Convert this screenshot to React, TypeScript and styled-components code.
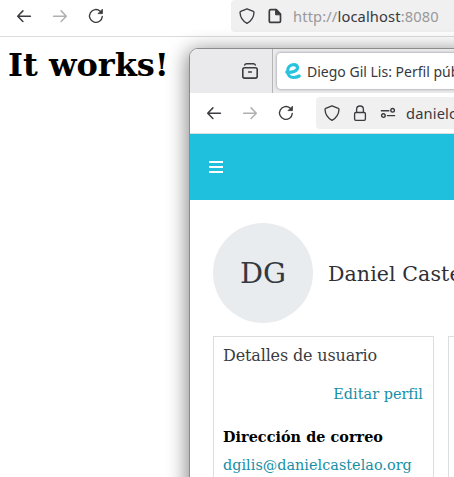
import React from "react";
import styled, { createGlobalStyle } from "styled-components";

const GlobalStyle = createGlobalStyle`
  * { box-sizing: border-box; }
  html, body { margin: 0; height: 100%; overflow: hidden; background: #fff; }
`;

const Desktop = styled.div`
  position: relative;
  width: 454px;
  height: 477px;
  overflow: hidden;
  background: #fff;
  font-family: "DejaVu Serif", serif;
`;

const Toolbar = styled.div<{ $height: number; $line: string; $shift?: number }>`
  display: flex;
  align-items: center;
  height: ${(p) => p.$height}px;
  border-bottom: 1px solid ${(p) => p.$line};
  padding-left: 16px;
  padding-bottom: ${(p) => p.$shift ?? 0}px;
  background: #fff;
  overflow: hidden;
`;

const NavButtons = styled.div`
  display: flex;
  gap: 20px;
  flex: none;
`;

const AddressBar = styled.div<{ $left: number; $gap: number }>`
  display: flex;
  align-items: center;
  flex: none;
  width: 400px;
  height: 32px;
  margin-left: ${(p) => p.$left}px;
  padding-left: 8px;
  gap: ${(p) => p.$gap}px;
  border-radius: 4px;
  background: #f0f0f0;
`;

const UiText = styled.span<{ $size?: number; $spacing?: number; $left?: number; $top?: number }>`
  font: ${(p) => p.$size ?? 14.67}px/20px "Noto Sans", sans-serif;
  letter-spacing: ${(p) => p.$spacing ?? 0}px;
  margin-left: ${(p) => p.$left ?? 0}px;
  margin-top: ${(p) => p.$top ?? 0}px;
  color: #38383d;
  white-space: nowrap;
`;

const Faint = styled.span`
  color: #98989a;
`;

const Heading = styled.h1`
  margin: 9px 0 0 8px;
  font-size: 32px;
  line-height: 38px;
  color: #000;
`;

const Window = styled.section`
  position: absolute;
  left: 189px;
  top: 48px;
  width: 500px;
  height: 600px;
  border: 1px solid #8c8c8c;
  border-radius: 9px 9px 0 0;
  background: #fff;
  box-shadow: 0 4px 20px 2px rgba(0, 0, 0, 0.48);
  overflow: hidden;
`;

const TabStrip = styled.div`
  display: flex;
  height: 44px;
  background: #eaeaed;
`;

const PinnedArea = styled.div`
  display: flex;
  align-items: center;
  width: 83px;
  padding-left: 52px;
  border-right: 1px solid #b5b5b8;
`;

const Tab = styled.div`
  display: flex;
  align-items: center;
  width: 300px;
  height: 36px;
  margin: 4px 0 0 4px;
  padding-left: 8px;
  border-radius: 4px;
  background: #fff;
  box-shadow: 0 0 3px rgba(80, 80, 90, 0.65);
`;

const Banner = styled.header`
  display: flex;
  align-items: center;
  height: 66px;
  padding-left: 19px;
  background: #1fc0de;
`;

const Profile = styled.div`
  display: flex;
  align-items: center;
  gap: 15px;
  padding: 23px 0 0 23px;
`;

const Avatar = styled.div`
  display: flex;
  align-items: center;
  justify-content: center;
  flex: none;
  width: 100px;
  height: 100px;
  border-radius: 50%;
  background: #e9ecef;
  color: #343a40;
  font-size: 28.8px;
`;

const Name = styled.h2`
  margin: 2px 0 0;
  font-size: 20.5px;
  font-weight: 400;
  letter-spacing: 0.1px;
  color: #2f3033;
  white-space: nowrap;
`;

const Cards = styled.div`
  display: flex;
  gap: 14px;
  padding: 13px 0 0 23px;
`;

const Card = styled.article`
  display: flex;
  flex-direction: column;
  flex: none;
  width: 221px;
  height: 240px;
  padding: 8px 10px 8px 9px;
  border: 1px solid #dddddf;
  font-size: 14.4px;
  line-height: 22px;
  white-space: nowrap;
`;

const CardTitle = styled.h3`
  margin: 0;
  font-size: 16px;
  font-weight: 400;
  letter-spacing: -0.15px;
  color: #3b3c3f;
`;

const ProfileLink = styled.a<{ $end?: boolean }>`
  align-self: ${(p) => (p.$end ? "flex-end" : "flex-start")};
  margin-top: ${(p) => (p.$end ? 16 : 6)}px;
  letter-spacing: 0.03px;
  color: #168fa6;
`;

const Term = styled.strong`
  margin-top: 21px;
  letter-spacing: 0.04px;
  color: #000;
`;

const Icon = styled.svg<{ $color?: string }>`
  display: block;
  flex: none;
  width: 16px;
  height: 16px;
  overflow: visible;
  fill: none;
  stroke: ${(p) => p.$color ?? "#3c3c40"};
  stroke-width: 1.5;
  stroke-linecap: round;
  stroke-linejoin: round;
`;

const Navigation = () => (
  <NavButtons>
    <Icon viewBox="0 0 16 16"><path d="M14.4 8.2H1.9M6.9 2.9 1.7 8.2 6.9 13.5" /></Icon>
    <Icon viewBox="0 0 16 16" $color="#b0b0b2"><path d="M1.6 8.2h12.5M9.1 2.9 14.3 8.2 9.1 13.5" /></Icon>
    <Icon viewBox="0 0 16 16">
      <path d="M12.2 3.2A6.4 6.4 0 1 0 14.3 8.4" strokeWidth="1.35" />
      <path d="M14.4 1.6v4h-4z" fill="#3c3c40" strokeWidth=".9" />
    </Icon>
  </NavButtons>
);

const ShieldIcon = () => (
  <Icon viewBox="0 0 16 16">
    <path d="M8 .8 14.3 3.3c.5.2.7.5.7 1C14.8 9 12.5 13 8 15.4 3.5 13 1.2 9 1 4.3c0-.5.2-.8.7-1Z" strokeWidth="1.35" />
  </Icon>
);

const PageIcon = () => (
  <Icon viewBox="0 0 16 16">
    <path d="M3.7 1.7h5.6l4.2 4.3v7c0 .9-.5 1.4-1.4 1.4H3.7c-.9 0-1.4-.5-1.4-1.4V3.1c0-.9.5-1.4 1.4-1.4Z" strokeWidth="1.7" />
    <path d="M8.6 1.7v5.1h4.9V6L9.3 1.7z" fill="#3c3c40" strokeWidth="1" />
  </Icon>
);

const LockIcon = () => (
  <Icon viewBox="0 0 16 16">
    <rect x="2.6" y="7.5" width="10.8" height="7.9" rx="1.3" strokeWidth="1.35" />
    <path d="M4.6 7.3V4.4a3.4 3.4 0 0 1 6.8 0v2.9" strokeWidth="1.35" />
  </Icon>
);

const PermissionsIcon = () => (
  <Icon viewBox="0 0 16 16">
    <g strokeWidth="1.4">
      <path d="M1.4 5.7h7.4M7.4 10.6h7.2" />
      <circle cx="12.6" cy="5.3" r="1.8" />
      <circle cx="3.4" cy="10.6" r="1.8" />
    </g>
  </Icon>
);

const ArchiveIcon = () => (
  <Icon viewBox="0 0 16 16">
    <rect x=".8" y="4.7" width="14.4" height="10.4" rx="1.8" strokeWidth="1.6" />
    <path d="M2.7 2C3.1 1 3.7.8 4.5.8h7c.8 0 1.4.2 1.8 1.2M6.6 9h2.8" strokeWidth="1.5" />
  </Icon>
);

const SiteLogo = () => (
  <Icon viewBox="0 0 16 16" $color="#29c3df">
    <path d="M1.8 9.2C6.8 9.7 12.5 8.2 12.5 4.7 12.5 2.6 10.6 1.6 8.6 1.6 4.9 1.6 2.6 4.6 2.6 8.2c0 4 2.4 6.3 6 6.3 2.2 0 3.8-.5 5.6-1.5" strokeWidth="3.2" />
  </Icon>
);

const MenuIcon = () => (
  <Icon viewBox="0 0 16 16" $color="#fff">
    <path d="M0 3h14M0 8h14M0 13h14" strokeWidth="2" strokeLinecap="butt" />
  </Icon>
);

export default function App() {
  return (
    <Desktop>
      <GlobalStyle />
      <Toolbar $height={37} $line="#dcdcdc" $shift={4}>
        <Navigation />
        <AddressBar $left={127} $gap={12}>
          <ShieldIcon />
          <PageIcon />
          <UiText $left={-2} $spacing={0.14}>
            <Faint>http://</Faint>localhost<Faint>:8080</Faint>
          </UiText>
        </AddressBar>
      </Toolbar>
      <Heading>It works!</Heading>
      <Window>
        <TabStrip>
          <PinnedArea><ArchiveIcon /></PinnedArea>
          <Tab>
            <SiteLogo />
            <UiText $size={14} $left={6} $top={2}>Diego Gil Lis: Perfil público</UiText>
          </Tab>
        </TabStrip>
        <Toolbar $height={41} $line="#dedede">
          <Navigation />
          <AddressBar $left={22} $gap={12}>
            <ShieldIcon />
            <LockIcon />
            <PermissionsIcon />
            <UiText $left={-2} $spacing={0.14}>danielcastelao.org</UiText>
          </AddressBar>
        </Toolbar>
        <Banner><MenuIcon /></Banner>
        <Profile>
          <Avatar>DG</Avatar>
          <Name>Daniel Castelao</Name>
        </Profile>
        <Cards>
          <Card>
            <CardTitle>Detalles de usuario</CardTitle>
            <ProfileLink $end>Editar perfil</ProfileLink>
            <Term>Dirección de correo</Term>
            <ProfileLink>dgilis@danielcastelao.org</ProfileLink>
          </Card>
          <Card />
        </Cards>
      </Window>
    </Desktop>
  );
}
